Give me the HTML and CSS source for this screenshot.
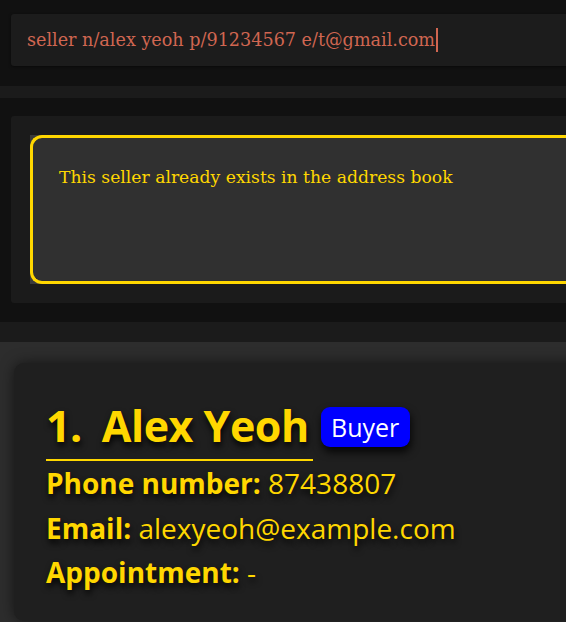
FILE: index.html
```html
<!DOCTYPE html>
<html>
<head>
<meta charset="utf-8">
<link rel="stylesheet" href="styles.css">
</head>
<body>
<div class="app">
  <div class="cmd-area">
    <div class="cmd-box"><span class="cmd-text">seller n/alex yeoh p/91234567 e/t@gmail.com</span><span class="caret"></span></div>
  </div>
  <div class="band band-small"></div>
  <div class="result-area">
    <div class="result-panel">
      <div class="result-box">
        <div class="result-inner">This seller already exists in the address book</div>
      </div>
    </div>
  </div>
  <div class="band band-large"></div>
  <div class="list-area">
    <div class="card">
      <div class="name-row">
        <div class="name"><span class="index">1.</span><span class="person">Alex Yeoh</span></div>
        <div class="tag">Buyer</div>
      </div>
      <div class="field"><span class="label">Phone number:</span> <span class="value">87438807</span></div>
      <div class="field"><span class="label">Email:</span> <span class="value">alexyeoh@example.com</span></div>
      <div class="field"><span class="label">Appointment:</span> <span class="value">-</span></div>
    </div>
  </div>
</div>
</body>
</html>
```
FILE: styles.css
```css
html, body {
  margin: 0;
  padding: 0;
  background: #111111;
  overflow: hidden;
  width: 566px;
  height: 622px;
}
.app {
  display: flex;
  flex-direction: column;
  height: 622px;
  overflow: hidden;
}
.cmd-area {
  padding: 14px 0 20px 11px;
}
.cmd-box {
  height: 52px;
  margin-right: -20px;
  background: #1c1c1c;
  border-radius: 3px;
  box-shadow: 0 1px 3px rgba(0,0,0,0.5);
  padding-left: 16px;
  display: flex;
  align-items: center;
  font-family: "DejaVu Serif", serif;
  font-size: 17.6px;
  line-height: 52px;
  color: #d06651;
}
.caret {
  display: inline-block;
  width: 1.5px;
  height: 24px;
  margin-left: 1px;
  background: #d06651;
}
.band {
  background: #1b1b1b;
}
.band-small { height: 12px; }
.band-large { height: 20px; }
.result-area {
  padding: 18px 0 19px 11px;
}
.result-panel {
  background: #1b1b1b;
  border-radius: 3px;
  margin-right: -20px;
  padding: 19px 0 19px 19px;
}
.result-box {
  background: #3a3a3a;
  height: 149px;
}
.result-inner {
  box-sizing: border-box;
  height: 149px;
  border: 3px solid #ffd700;
  border-right: none;
  border-radius: 12px 0 0 12px;
  background: #303030;
  padding: 27px 0 0 26px;
  font-family: "DejaVu Serif", serif;
  font-size: 17.2px;
  line-height: 24px;
  color: #ffd700;
}
.list-area {
  flex: 1;
  background: #2d2d2d;
  padding: 21px 0 0 14px;
}
.card {
  height: 258px;
  margin-right: -30px;
  background: #1f1f1f;
  border-radius: 10px;
  box-shadow: 0 0 14px rgba(0,0,0,0.55);
  padding: 33px 0 0 32px;
  box-sizing: border-box;
  font-family: "Open Sans", sans-serif;
  color: #ffd700;
}
.name-row {
  display: flex;
  align-items: flex-start;
}
.name {
  font-size: 43px;
  font-weight: 700;
  line-height: 60px;
  padding: 0 4px 3px 0;
  border-bottom: 2px solid #ffd700;
  text-shadow: 1px 4px 6px rgba(0,0,0,0.9);
  letter-spacing: -0.5px;
}
.index {
  margin-right: 20px;
}
.tag {
  margin: 11px 0 0 8px;
  width: 89px;
  height: 40px;
  border-radius: 9px;
  background: #0000ff;
  color: #ffffff;
  font-size: 25px;
  line-height: 40px;
  text-align: center;
  box-shadow: 1px 5px 8px rgba(0,0,0,0.85);
}
.field {
  font-size: 28px;
  line-height: 44.5px;
  text-shadow: 1px 4px 6px rgba(0,0,0,0.9);
  white-space: nowrap;
}
.label {
  font-weight: 700;
}
.value {
  font-weight: 400;
}
```
